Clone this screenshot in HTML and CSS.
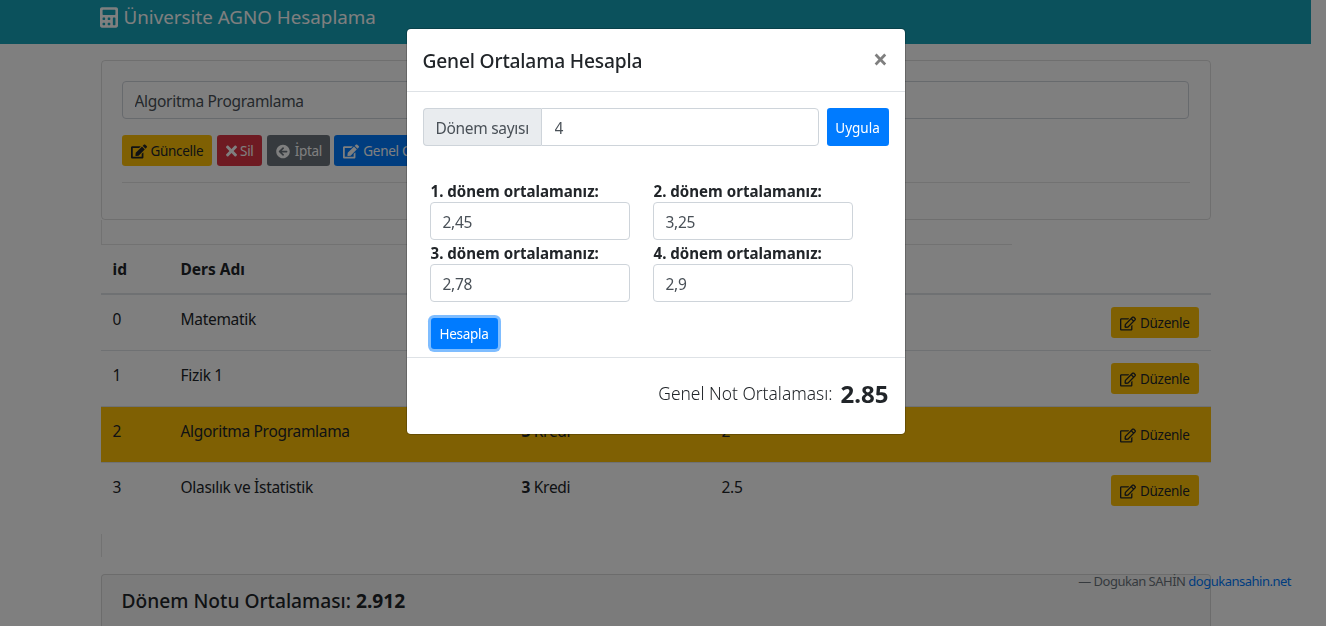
FILE: index.html
```html
<!DOCTYPE html>
<html lang="tr">
<head>
<meta charset="utf-8">
<title>Üniversite AGNO Hesaplama</title>
<link rel="stylesheet" href="styles.css">
</head>
<body>
<svg class="defs" aria-hidden="true">
  <symbol id="i-calc" viewBox="0 0 448 512"><path d="M400 0H48C22.4 0 0 22.4 0 48v416c0 25.6 22.4 48 48 48h352c25.6 0 48-22.4 48-48V48c0-25.6-22.4-48-48-48zM128 435.2c0 6.4-6.4 12.8-12.8 12.8H76.8c-6.4 0-12.8-6.4-12.8-12.8v-38.4c0-6.4 6.4-12.8 12.8-12.8h38.4c6.4 0 12.8 6.4 12.8 12.8v38.4zm0-128c0 6.4-6.4 12.8-12.8 12.8H76.8c-6.4 0-12.8-6.4-12.8-12.8v-38.4c0-6.4 6.4-12.8 12.8-12.8h38.4c6.4 0 12.8 6.4 12.8 12.8v38.4zm128 128c0 6.4-6.4 12.8-12.8 12.8h-38.4c-6.4 0-12.8-6.4-12.8-12.8v-38.4c0-6.4 6.4-12.8 12.8-12.8h38.4c6.4 0 12.8 6.4 12.8 12.8v38.4zm0-128c0 6.4-6.4 12.8-12.8 12.8h-38.4c-6.4 0-12.8-6.4-12.8-12.8v-38.4c0-6.4 6.4-12.8 12.8-12.8h38.4c6.4 0 12.8 6.4 12.8 12.8v38.4zm128 128c0 6.4-6.4 12.8-12.8 12.8h-38.4c-6.4 0-12.8-6.4-12.8-12.8V268.8c0-6.4 6.4-12.8 12.8-12.8h38.4c6.4 0 12.8 6.4 12.8 12.8v166.4zm0-256c0 6.4-6.4 12.8-12.8 12.8H76.8c-6.4 0-12.8-6.4-12.8-12.8V76.8C64 70.4 70.4 64 76.8 64h294.4c6.4 0 12.8 6.4 12.8 12.8v102.4z"/></symbol>
  <symbol id="i-edit" viewBox="0 0 576 512"><path d="M402.6 83.2l90.2 90.2c3.8 3.8 3.8 10 0 13.8L274.4 405.6l-92.8 10.3c-12.4 1.4-22.9-9.1-21.5-21.5l10.3-92.8L388.8 83.2c3.8-3.8 10-3.8 13.8 0zm162-22.9l-48.8-48.8c-15.2-15.2-39.9-15.2-55.2 0l-35.4 35.4c-3.8 3.8-3.8 10 0 13.8l90.2 90.2c3.8 3.8 10 3.8 13.8 0l35.4-35.4c15.2-15.3 15.2-40 0-55.2zM384 346.2V448H64V128h229.8c3.2 0 6.2-1.3 8.5-3.5l40-40c7.6-7.6 2.2-20.5-8.5-20.5H48C21.5 64 0 85.5 0 112v352c0 26.5 21.5 48 48 48h352c26.5 0 48-21.5 48-48V306.2c0-10.7-12.9-16-20.5-8.5l-40 40c-2.2 2.3-3.5 5.3-3.5 8.5z"/></symbol>
  <symbol id="i-edit-o" viewBox="0 0 576 512"><path d="M402.3 344.9l32-32c5-5 13.7-1.5 13.7 5.7V464c0 26.5-21.5 48-48 48H48c-26.5 0-48-21.5-48-48V112c0-26.5 21.5-48 48-48h273.5c7.1 0 10.7 8.6 5.7 13.7l-32 32c-1.5 1.5-3.5 2.3-5.7 2.3H48v352h352V350.5c0-2.1.8-4.1 2.3-5.6zm156.6-201.8L296.3 405.7l-90.4 10c-26.2 2.9-48.5-19.2-45.6-45.6l10-90.4L432.9 17.1c22.9-22.9 59.9-22.9 82.7 0l43.2 43.2c22.9 22.9 22.9 60 .1 82.8zM460.1 174L402 115.9 216.2 301.8l-7.3 65.3 65.3-7.3L460.1 174zm64.8-79.7l-43.2-43.2c-4.1-4.1-10.8-4.1-14.8 0L436 82l58.1 58.1 30.9-30.9c4-4.2 4-10.8-.1-14.9z"/></symbol>
  <symbol id="i-times" viewBox="0 0 352 512"><path d="M242.72 256l100.07-100.07c12.28-12.28 12.28-32.19 0-44.48l-22.24-22.24c-12.28-12.28-32.19-12.28-44.48 0L176 189.28 75.93 89.21c-12.28-12.28-32.19-12.28-44.48 0L9.21 111.45c-12.28 12.28-12.28 32.19 0 44.48L109.28 256 9.21 356.07c-12.28 12.28-12.28 32.19 0 44.48l22.24 22.24c12.28 12.28 32.2 12.28 44.48 0L176 322.72l100.07 100.07c12.28 12.28 32.2 12.28 44.48 0l22.24-22.24c12.28-12.28 12.28-32.19 0-44.48L242.72 256z"/></symbol>
  <symbol id="i-back" viewBox="0 0 512 512"><path d="M256 504C119 504 8 393 8 256S119 8 256 8s248 111 248 248-111 248-248 248zm28.9-143.6L209.4 288H392c13.3 0 24-10.7 24-24v-16c0-13.3-10.7-24-24-24H209.4l75.5-72.4c9.7-9.3 9.9-24.8.4-34.3l-11-10.9c-9.4-9.4-24.6-9.4-33.9 0L107.7 239c-9.4 9.4-9.4 24.6 0 33.9l132.7 132.7c9.4 9.4 24.6 9.4 33.9 0l11-10.9c9.5-9.5 9.3-25-.4-34.3z"/></symbol>
</svg>

<div class="page">
  <header class="navbar">
    <div class="container">
      <a class="brand"><svg class="brand-icon"><use href="#i-calc"/></svg>Üniversite AGNO Hesaplama</a>
    </div>
  </header>

  <main class="container">
    <section class="card form-card">
      <input class="control" type="text" value="Algoritma Programlama">
      <div class="actions">
        <button class="btn btn-warning"><svg class="icon"><use href="#i-edit"/></svg>Güncelle</button>
        <button class="btn btn-danger btn-delete"><svg class="icon icon-x"><use href="#i-times"/></svg>Sil</button>
        <button class="btn btn-secondary btn-cancel"><svg class="icon icon-round"><use href="#i-back"/></svg>İptal</button>
        <button class="btn btn-primary btn-overall"><svg class="icon"><use href="#i-edit"/></svg>Genel Ortalama</button>
      </div>
      <hr class="rule">
    </section>

    <div class="gap-top"></div>

    <table class="table">
      <thead>
        <tr><th class="c-id">id</th><th class="c-name">Ders Adı</th><th class="c-credit">Kredi</th><th class="c-grade">Not</th><th></th></tr>
      </thead>
      <tbody>
        <tr><td>0</td><td>Matematik</td><td><b>4</b> Kredi</td><td>3</td><td class="c-act"><button class="btn btn-warning"><svg class="icon"><use href="#i-edit-o"/></svg>Düzenle</button></td></tr>
        <tr><td>1</td><td>Fizik 1</td><td><b>4</b> Kredi</td><td>3</td><td class="c-act"><button class="btn btn-warning"><svg class="icon"><use href="#i-edit-o"/></svg>Düzenle</button></td></tr>
        <tr class="row-active"><td>2</td><td>Algoritma Programlama</td><td><b>3</b> Kredi</td><td>2</td><td class="c-act"><button class="btn btn-warning"><svg class="icon"><use href="#i-edit-o"/></svg>Düzenle</button></td></tr>
        <tr><td>3</td><td>Olasılık ve İstatistik</td><td><b>3</b> Kredi</td><td>2.5</td><td class="c-act"><button class="btn btn-warning"><svg class="icon"><use href="#i-edit-o"/></svg>Düzenle</button></td></tr>
      </tbody>
    </table>

    <div class="gap-bottom"></div>

    <section class="card summary-card">
      <h5 class="summary">Dönem Notu Ortalaması: <b>2.912</b></h5>
    </section>
  </main>

  <p class="credit">— Dogukan SAHİN <a>dogukansahin.net</a></p>
</div>

<div class="backdrop"></div>

<div class="modal">
  <div class="dialog">
    <div class="modal-header">
      <h5 class="modal-title">Genel Ortalama Hesapla</h5>
      <span class="close">×</span>
    </div>
    <div class="modal-body">
      <div class="apply-row">
        <div class="input-group">
          <span class="addon">Dönem sayısı</span>
          <input class="control group-control" type="text" value="4">
        </div>
        <button class="btn btn-primary btn-apply">Uygula</button>
      </div>
      <div class="terms">
        <label class="term"><span class="term-label">1. dönem ortalamanız:</span><input class="control" type="text" value="2,45"></label>
        <label class="term"><span class="term-label">2. dönem ortalamanız:</span><input class="control" type="text" value="3,25"></label>
        <label class="term"><span class="term-label">3. dönem ortalamanız:</span><input class="control" type="text" value="2,78"></label>
        <label class="term"><span class="term-label">4. dönem ortalamanız:</span><input class="control" type="text" value="2,9"></label>
      </div>
      <button class="btn btn-primary btn-calc">Hesapla</button>
    </div>
    <div class="modal-footer">
      <span class="result-label">Genel Not Ortalaması:</span>
      <strong class="result-value">2.85</strong>
    </div>
  </div>
</div>
</body>
</html>
```
FILE: styles.css
```css
* { box-sizing: border-box; }
html, body { margin: 0; height: 100%; overflow: hidden; }
body {
  font-family: "Noto Sans", "Open Sans", "Liberation Sans", sans-serif;
  font-size: 15.5px;
  line-height: 24px;
  letter-spacing: -0.3px;
  color: #212529;
  background: #fff;
}
.defs { position: absolute; width: 0; height: 0; }
.page { width: 1311px; height: 100%; position: relative; }
.container { width: 1140px; margin: 0 auto; padding: 0 15px; }

.navbar { height: 44px; background: #17a2b8; padding-top: 2px; }
.brand { display: flex; align-items: center; gap: 6px; height: 30px; margin-left: -1px; color: #fff; font-size: 18.8px; line-height: 30px; letter-spacing: 0; }
.brand-icon { width: 18px; height: 21px; fill: currentColor; }

.card { border: 1px solid rgba(0,0,0,.125); border-radius: 4px; }
.form-card { margin-top: 16px; height: 160px; padding: 20px 21px 20px 20px; }
.control {
  display: block; width: 100%; height: 38px; padding: 7px 12px 5px;
  border: 1px solid #ced4da; border-radius: 4px;
  font: inherit; letter-spacing: -0.3px; color: #495057; background: #fff; outline: 0;
}
.actions { display: flex; gap: 5px; margin-top: 16px; }
.btn {
  display: inline-flex; align-items: center; justify-content: center;
  height: 31px; padding: 1px 8px 0; border: 1px solid transparent; border-radius: 3.2px;
  font: inherit; font-size: 13.5px; line-height: 21px; letter-spacing: -0.3px; cursor: pointer; white-space: nowrap;
}
.btn-warning { background: #ffc107; color: #212529; }
.btn-danger { background: #dc3545; color: #fff; }
.btn-secondary { background: #6c757d; color: #fff; }
.btn-primary { background: #007bff; color: #fff; }
.icon { width: 16px; height: 15px; margin-right: 4px; fill: currentColor; flex: none; }
.icon-x { width: 11px; height: 16px; margin-right: 3px; }
.icon-round { width: 14px; margin-right: 5px; }
.btn-delete { width: 45px; padding-left: 0; padding-right: 0; }
.btn-cancel { width: 63px; padding-left: 0; padding-right: 0; }
.btn-overall { margin-left: -1px; }
.rule { margin: 16px -1px 0 0; border: 0; border-top: 1px solid rgba(0,0,0,.1); }

.gap-top { width: 911px; height: 25px; border-left: 1px solid rgba(0,0,0,.1); border-bottom: 1px solid rgba(0,0,0,.1); }

.table { width: 100%; table-layout: fixed; border-collapse: separate; border-spacing: 0; margin-bottom: 16px; }
.table th { height: 50px; padding: 12px; text-align: left; font-weight: 700; letter-spacing: 0; border-bottom: 2px solid #dee2e6; vertical-align: top; }
.table td { height: 56px; padding: 12px; vertical-align: top; border-bottom: 1px solid #dee2e6; }
.table tbody tr:last-child td { border-bottom: 0; height: 55px; }
.c-id { width: 68px; }
.c-name { width: 341px; }
.c-credit { width: 200px; }
.c-grade { width: 200px; }
.table .c-act { text-align: right; }
.row-active td { background: #ffc107; }

.gap-bottom { height: 23px; border-left: 1px solid rgba(0,0,0,.1); margin-bottom: 17px; }
.summary-card { background: rgba(0,0,0,.03); padding: 11px 20px 40px; }
.summary { margin: 0; font-size: 19.2px; line-height: 30px; font-weight: 500; letter-spacing: 0; }

.credit { position: absolute; right: 20px; top: 569px; margin: 0; font-size: 13px; letter-spacing: -0.5px; color: #6c757d; }
.credit a { color: #007bff; }

.backdrop { position: fixed; inset: 0; background: rgba(0,0,0,.5); }
.modal { position: fixed; top: 0; left: 0; width: 1311px; display: flex; justify-content: center; padding-top: 28px; }
.dialog { width: 500px; background: #fff; border: 1px solid rgba(0,0,0,.2); border-radius: 4.8px; background-clip: padding-box; }
.modal-header { display: flex; justify-content: space-between; align-items: flex-start; padding: 17px 16px 15px; border-bottom: 1px solid #dee2e6; height: 63px; }
.modal-title { margin: 0; font-size: 19.2px; line-height: 30px; font-weight: 500; letter-spacing: -0.18px; }
.close { font-size: 26px; line-height: 26px; font-weight: 700; color: #7f7f7f; margin-right: 1px; }
.modal-body { padding: 16px 16px 8px; }
.apply-row { display: flex; gap: 8px; }
.input-group { display: flex; flex: 1; }
.addon { display: flex; align-items: center; padding: 1px 12px 0; color: #495057; background: #e9ecef; border: 1px solid #ced4da; border-right: 0; border-radius: 4px 0 0 4px; white-space: nowrap; width: 118px; }
.group-control { border-radius: 0 4px 4px 0; flex: 1; width: auto; min-width: 0; padding-left: 13px; }
.btn-apply { height: 38px; width: 62px; padding: 2px 0 0; letter-spacing: 0; }
.terms { display: grid; grid-template-columns: 200px 200px; column-gap: 23px; margin: 32px 0 16px 7px; }
.term { display: block; }
.term-label { display: block; height: 24px; font-weight: 700; font-size: 15.1px; line-height: 24px; padding: 1px 0 0 1px; letter-spacing: 0; white-space: nowrap; }
.btn-calc { margin-left: 8px; width: 67px; padding: 2px 0 0; box-shadow: 0 0 0 3px rgba(0,123,255,.5); }
.modal-footer { display: flex; justify-content: flex-end; align-items: center; gap: 8px; height: 77px; padding: 18px 16px 23px; border-top: 1px solid #dee2e6; letter-spacing: 0; }
.result-label { font-size: 17.4px; font-weight: 300; line-height: 36px; margin-bottom: 2px; }
.result-value { font-size: 24px; line-height: 36px; font-weight: 700; }
```
